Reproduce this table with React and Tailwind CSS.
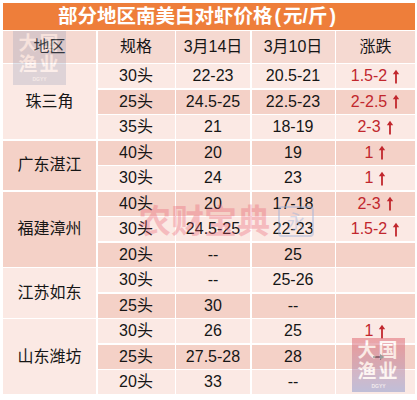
import React from 'react';

const LIGHT = 'bg-[#fbe9e4]';
const DARK = 'bg-[#f4d1c7]';

const groups = [
  { name: '珠三角', tone: LIGHT, rows: [
    ['30头', '22-23', '20.5-21', '1.5-2'],
    ['25头', '24.5-25', '22.5-23', '2-2.5'],
    ['35头', '21', '18-19', '2-3'],
  ] },
  { name: '广东湛江', tone: DARK, rows: [
    ['40头', '20', '19', '1'],
    ['30头', '24', '23', '1'],
  ] },
  { name: '福建漳州', tone: DARK, rows: [
    ['40头', '20', '17-18', '2-3'],
    ['30头', '24.5-25', '22-23', '1.5-2'],
    ['20头', '--', '25', ''],
  ] },
  { name: '江苏如东', tone: LIGHT, rows: [
    ['30头', '--', '25-26', ''],
    ['25头', '30', '--', ''],
  ] },
  { name: '山东潍坊', tone: LIGHT, rows: [
    ['30头', '26', '25', '1'],
    ['25头', '27.5-28', '28', 'flat'],
    ['20头', '33', '--', ''],
  ] },
];

const spanClass = { 2: 'row-span-2', 3: 'row-span-3' };

const UpArrow = () => (
  <svg width="8" height="15" viewBox="0 0 8 15" className="ml-[5px]" fill="none">
    <path d="M4 14.5V3" stroke="#c1272d" strokeWidth="1.8" />
    <path d="M0.8 5.2L4 0.8L7.2 5.2Z" fill="#c1272d" />
  </svg>
);

const Change = ({ value }) => {
  if (!value) return null;
  if (value === 'flat') {
    return (
      <svg width="12" height="8" viewBox="0 0 12 8" className="ml-[6px]">
        <path d="M0 4H8" stroke="#222" strokeWidth="1.6" />
        <path d="M7 1L11.5 4L7 7Z" fill="#222" />
      </svg>
    );
  }
  return (
    <span className="text-[#c1272d] flex items-center">
      {value}
      <UpArrow />
    </span>
  );
};

// 大国渔业 watermark block
const FisheryMark = ({ className }) => (
  <div className={`absolute flex flex-col items-center justify-center w-[53px] h-[54px] text-white font-bold leading-none pointer-events-none ${className}`}>
    <span className="text-[19px] tracking-[2px]">大国</span>
    <span className="text-[19px] tracking-[2px] mt-[2px]">渔业</span>
    <span className="text-[5px] mt-[3px] opacity-80">DGYY</span>
  </div>
);

export default function App() {
  let rowIndex = 0;

  return (
    <div
      className="relative w-[417px] h-[400px] bg-white overflow-hidden pt-[3px] pl-[3px] pr-[2px]"
      style={{ fontFamily: '"Liberation Sans", "Noto Sans CJK SC", sans-serif' }}
    >
      {/* 标题栏 */}
      <div className="h-[27px] bg-[#ee7e3a] text-white font-bold text-[19.5px] flex items-center justify-start pl-[55px]">
        部分地区南美白对虾价格<span className="mx-[2px]">(</span>元/斤<span className="mx-[2px]">)</span>
      </div>

      {/* 表格 */}
      <div className="mt-[1px] grid grid-cols-[93px_77px_74px_83px_79px] grid-rows-[31.5px_repeat(13,24px)] gap-x-[1.5px] gap-y-[1.5px] bg-white text-[16px] text-[#161616]">
        {['地区', '规格', '3月14日', '3月10日', '涨跌'].map((h) => (
          <div key={h} className="bg-[#f5d9d1] flex items-center justify-center">
            {h}
          </div>
        ))}

        {groups.map((g) => (
          <React.Fragment key={g.name}>
            <div className={`${spanClass[g.rows.length]} ${g.tone} flex items-center justify-center`}>
              {g.name}
            </div>
            {g.rows.map((r, i) => {
              const tone = rowIndex++ % 2 === 0 ? LIGHT : DARK;
              return (
                <React.Fragment key={i}>
                  <div className={`${tone} flex items-center justify-center`}>{r[0]}</div>
                  <div className={`${tone} flex items-center justify-center`}>{r[1]}</div>
                  <div className={`${tone} flex items-center justify-center`}>{r[2]}</div>
                  <div className={`${tone} flex items-center justify-center`}>
                    <Change value={r[3]} />
                  </div>
                </React.Fragment>
              );
            })}
          </React.Fragment>
        ))}
      </div>

      {/* 水印 */}
      <FisheryMark className="left-[13px] top-[31px] bg-[#8a96b4] opacity-25" />
      <FisheryMark className="left-[352px] top-[338px] bg-gradient-to-b from-[#e26a74] to-[#8f9ccf] opacity-55" />

      <div className="absolute left-[138px] top-[205px] flex items-center pointer-events-none">
        <span className="text-[33px] font-bold text-[#e9546a] opacity-30 leading-none">农财宝典</span>
        <span className="ml-[8px] w-[36px] h-[31px] border-2 border-[#9fb4dc] rounded-[4px] opacity-45 flex items-center justify-center text-[18px] text-[#9fb4dc] leading-none">
          永
        </span>
      </div>
    </div>
  );
}
